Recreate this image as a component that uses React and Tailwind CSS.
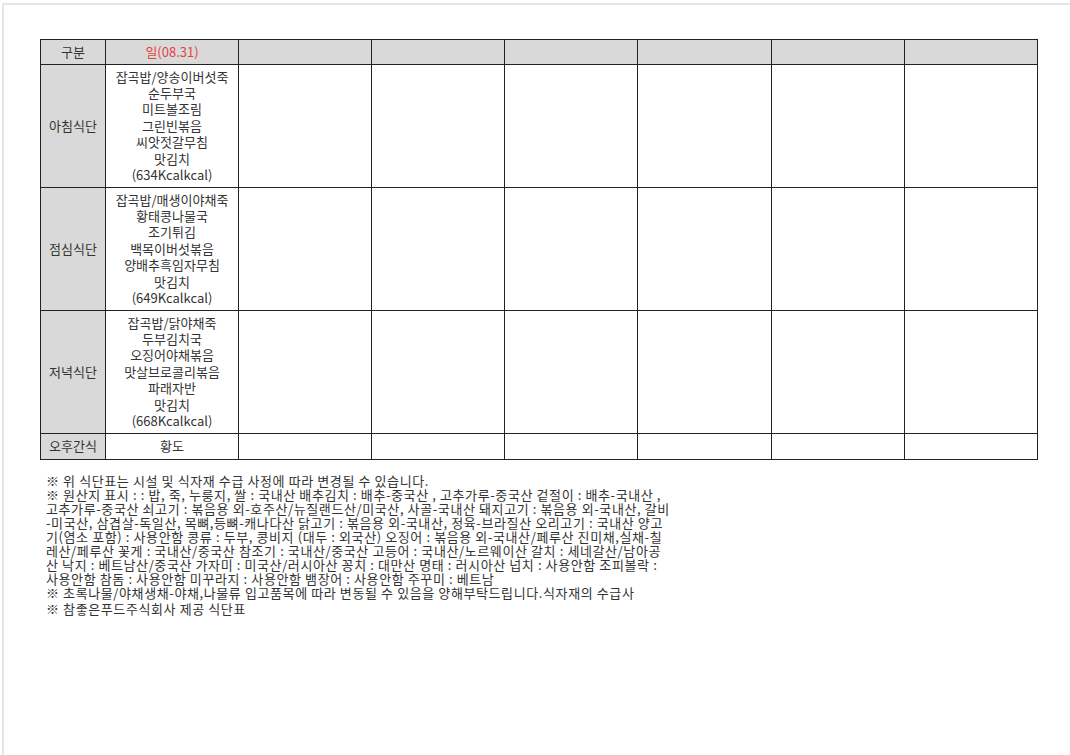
import React from "react";

const font = { fontFamily: '"Noto Sans CJK KR", "Noto Sans", sans-serif' };

const meals = [
  {
    label: "아침식단",
    items: ["잡곡밥/양송이버섯죽", "순두부국", "미트볼조림", "그린빈볶음", "씨앗젓갈무침", "맛김치", "(634Kcalkcal)"],
  },
  {
    label: "점심식단",
    items: ["잡곡밥/매생이야채죽", "황태콩나물국", "조기튀김", "백목이버섯볶음", "양배추흑임자무침", "맛김치", "(649Kcalkcal)"],
  },
  {
    label: "저녁식단",
    items: ["잡곡밥/닭야채죽", "두부김치국", "오징어야채볶음", "맛살브로콜리볶음", "파래자반", "맛김치", "(668Kcalkcal)"],
  },
];

const notes = [
  "※ 위 식단표는 시설 및 식자재 수급 사정에 따라 변경될 수 있습니다.",
  "※ 원산지 표시 : : 밥, 죽, 누룽지, 쌀 : 국내산 배추김치 : 배추-중국산 , 고추가루-중국산 겉절이 : 배추-국내산 ,",
  "고추가루-중국산 쇠고기 : 볶음용 외-호주산/뉴질랜드산/미국산, 사골-국내산 돼지고기 : 볶음용 외-국내산, 갈비",
  "-미국산, 삼겹살-독일산, 목뼈,등뼈-캐나다산 닭고기 : 볶음용 외-국내산, 정육-브라질산 오리고기 : 국내산 양고",
  "기(염소 포함) : 사용안함 콩류 : 두부, 콩비지 (대두 : 외국산) 오징어 : 볶음용 외-국내산/페루산 진미채,실채-칠",
  "레산/페루산 꽃게 : 국내산/중국산 참조기 : 국내산/중국산 고등어 : 국내산/노르웨이산 갈치 : 세네갈산/남아공",
  "산 낙지 : 베트남산/중국산 가자미 : 미국산/러시아산 꽁치 : 대만산 명태 : 러시아산 넙치 : 사용안함 조피볼락 :",
  "사용안함 참돔 : 사용안함 미꾸라지 : 사용안함 뱀장어 : 사용안함 주꾸미 : 베트남",
  "※ 초록나물/야채생채-야채,나물류 입고품목에 따라 변동될 수 있음을 양해부탁드립니다.식자재의 수급사",
];

const emptyCols = [0, 1, 2, 3, 4, 5];

export default function App() {
  return (
    <div className="w-[1070px] h-[755px] bg-white overflow-hidden" style={font}>
      <div className="ml-[2px] mt-[3px] h-[760px] border-t-2 border-l-2 border-[#e6e6e6] pl-[36px] pt-[34px] text-[#333]">
        <table className="table-fixed border-collapse w-[998px] text-[13px] leading-[16.4px] text-center">
          <colgroup>
            <col className="w-[65px]" />
            <col className="w-[133px]" />
            {emptyCols.map(i => (
              <col key={i} />
            ))}
          </colgroup>
          <tbody>
            <tr className="h-[25px] bg-[#d9d9d9]">
              <td className="border border-[#222]">구분</td>
              <td className="border border-[#222] text-[#e8403f]">일(08.31)</td>
              {emptyCols.map(i => (
                <td key={i} className="border border-[#222]" />
              ))}
            </tr>
            {meals.map(m => (
              <tr key={m.label} className="h-[123px]">
                <td className="border border-[#222] bg-[#d9d9d9]">{m.label}</td>
                <td className="border border-[#222] py-[3px]">
                  {m.items.map(t => (
                    <div key={t}>{t}</div>
                  ))}
                </td>
                {emptyCols.map(i => (
                  <td key={i} className="border border-[#222]" />
                ))}
              </tr>
            ))}
            <tr className="h-[26px]">
              <td className="border border-[#222] bg-[#d9d9d9]">오후간식</td>
              <td className="border border-[#222]">황도</td>
              {emptyCols.map(i => (
                <td key={i} className="border border-[#222]" />
              ))}
            </tr>
          </tbody>
        </table>

        <div className="mt-[14px] pl-[6px] text-[13px] leading-[14px] tracking-[0.6px]">
          {notes.map(n => (
            <div key={n} className="whitespace-nowrap">
              {n}
            </div>
          ))}
          <div className="mt-[2px] whitespace-nowrap">※ 참좋은푸드주식회사 제공 식단표</div>
        </div>
      </div>
    </div>
  );
}
